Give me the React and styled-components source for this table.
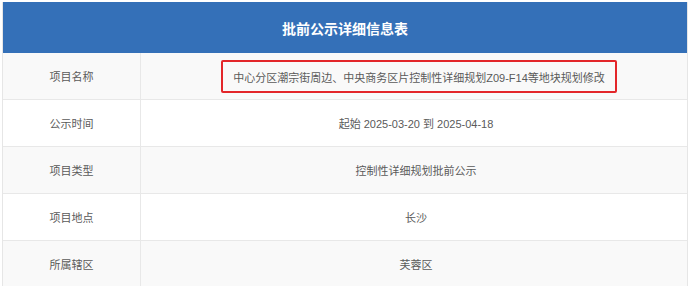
import React from 'react'
import styled, { createGlobalStyle } from 'styled-components'

const GlobalStyle = createGlobalStyle`
  html, body {
    margin: 0;
    padding: 0;
    background: #fff;
  }
  body {
    padding: 2px;
    font-family: "Liberation Sans", "Noto Sans CJK SC", sans-serif;
  }
`

const Table = styled.div`
  width: 686px;
  display: grid;
  grid-template-columns: 138px 1fr;
  border-left: 1px solid #e6e6e6;
  border-right: 1px solid #e6e6e6;
  box-sizing: border-box;
`

const Header = styled.div`
  grid-column: 1 / -1;
  height: 51px;
  background: #3470b8;
  color: #fff;
  font-size: 14px;
  font-weight: bold;
  display: flex;
  align-items: center;
  justify-content: center;
`

const Cell = styled.div`
  height: 47px;
  box-sizing: border-box;
  border-bottom: 1px solid #e8e8e8;
  background: ${({ $striped }) => ($striped ? '#f9f9f9' : '#fff')};
  color: #5a5a5a;
  font-size: 11px;
  display: flex;
  align-items: center;
  justify-content: center;
`

const Label = styled(Cell)`
  border-right: 1px solid #e8e8e8;
`

const Value = styled(Cell)`
  padding-left: 4px;
`

// red outline drawn around the highlighted project name
const Marked = styled.span`
  display: inline-block;
  margin-left: 6px;
  padding: 7px 10px 6px 10px;
  border: 2px solid #e3262a;
  border-radius: 2px;
`

const rows = [
  { label: '项目名称', value: '中心分区潮宗街周边、中央商务区片控制性详细规划Z09-F14等地块规划修改', marked: true },
  { label: '公示时间', value: '起始 2025-03-20 到 2025-04-18' },
  { label: '项目类型', value: '控制性详细规划批前公示' },
  { label: '项目地点', value: '长沙' },
  { label: '所属辖区', value: '芙蓉区' },
]

export default function App() {
  return (
    <>
      <GlobalStyle />
      <Table>
        <Header>批前公示详细信息表</Header>
        {rows.map((row, i) => (
          <React.Fragment key={row.label}>
            <Label $striped={i % 2 === 0}>{row.label}</Label>
            <Value $striped={i % 2 === 0}>
              {row.marked ? <Marked>{row.value}</Marked> : row.value}
            </Value>
          </React.Fragment>
        ))}
      </Table>
    </>
  )
}
